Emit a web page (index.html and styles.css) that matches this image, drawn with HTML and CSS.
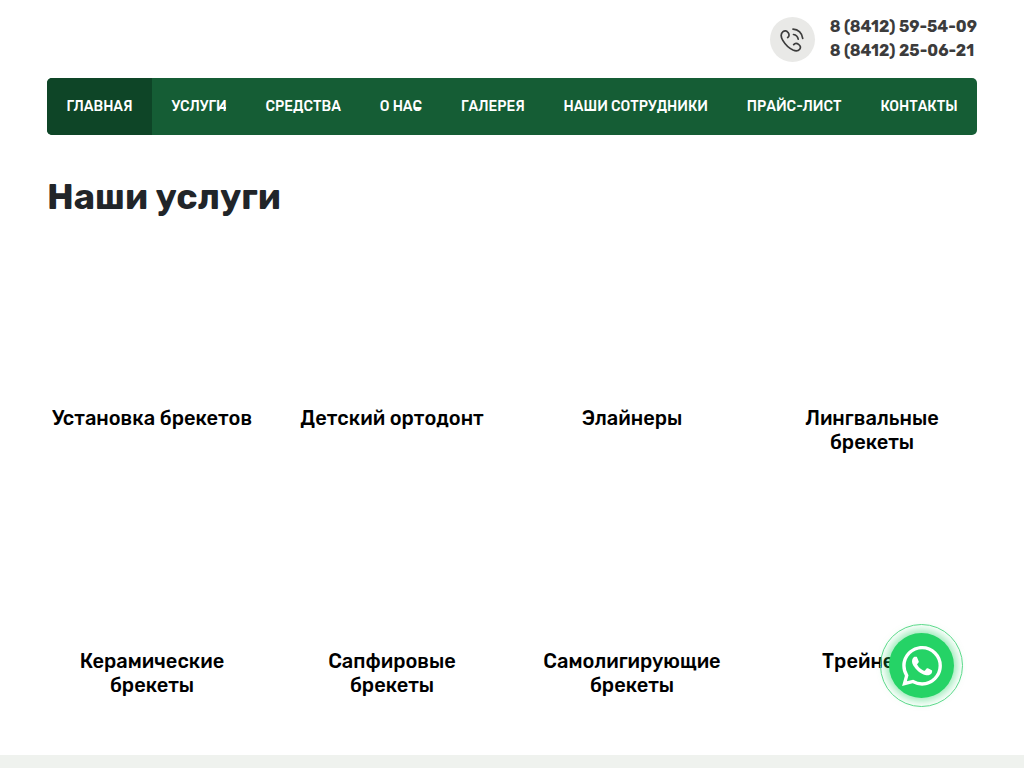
FILE: index.html
```html
<!DOCTYPE html>
<html lang="ru">
<head>
<meta charset="utf-8">
<meta name="viewport" content="width=device-width, initial-scale=1">
<title>Наши услуги</title>
<link rel="stylesheet" href="styles.css">
</head>
<body>
<header class="container">
  <div class="phones">
    <span class="phone-icon">
      <svg viewBox="0 0 26 26" width="26" height="26" fill="none" stroke="#3c3c3c" stroke-width="1.700" stroke-linecap="round" stroke-linejoin="round" aria-hidden="true"><path d="M8.700 10.500c1.800-1.200 1.600-3.300.4-4.900C8 3.800 5.700 3.300 4 4.700 1.600 6.700 1.800 10 3.800 13.400c2.400 4 6.200 7.800 10.200 9.600 2.600 1.100 5.200 1 6.700-.8 1.300-1.600.7-3.500-.8-4.600-1.500-1.200-3.800-1.700-5.200 0M14.500 7.500c2.600.4 4.200 2 4.700 4.600M14 2.200c5.300.2 9.200 3.900 9.700 9.200"/></svg>
    </span>
    <div class="phone-list">
      <a href="tel:88412595409">8 (8412) 59-54-09</a>
      <a href="tel:88412250621">8 (8412) 25-06-21</a>
    </div>
  </div>
  <nav class="menu">
    <a class="active" href="#"><span>Главная</span></a>
    <a href="#"><span class="dropdown">Услуги</span></a>
    <a href="#"><span class="dropdown">Средства</span></a>
    <a href="#"><span class="dropdown">О нас</span></a>
    <a href="#"><span>Галерея</span></a>
    <a href="#"><span>Наши сотрудники</span></a>
    <a href="#"><span>Прайс-лист</span></a>
    <a href="#"><span>Контакты</span></a>
  </nav>
</header>
<main class="container">
  <h1>Наши услуги</h1>
  <div class="services">
    <a href="#">Установка брекетов</a>
    <a href="#">Детский ортодонт</a>
    <a href="#">Элайнеры</a>
    <a href="#">Лингвальные брекеты</a>
    <a href="#">Керамические брекеты</a>
    <a href="#">Сапфировые брекеты</a>
    <a href="#">Самолигирующие брекеты</a>
    <a href="#">Трейнеры</a>
  </div>
</main>
<footer class="footer"></footer>
<a class="whatsapp" href="#" aria-label="WhatsApp">
  <svg viewBox="0 0 24 24" width="40" height="40" fill="#fff" aria-hidden="true"><path d="M17.472 14.382c-.297-.149-1.758-.867-2.030-.967-.273-.099-.471-.148-.670.150-.197.297-.767.966-.940 1.164-.173.199-.347.223-.644.075-.297-.150-1.255-.463-2.390-1.475-.883-.788-1.480-1.761-1.653-2.059-.173-.297-.018-.458.130-.606.134-.133.298-.347.446-.520.149-.174.198-.298.298-.497.099-.198.050-.371-.025-.520-.075-.149-.669-1.612-.916-2.207-.242-.579-.487-.500-.669-.510-.173-.008-.371-.010-.570-.010-.198 0-.520.074-.792.372-.272.297-1.040 1.016-1.040 2.479 0 1.462 1.065 2.875 1.213 3.074.149.198 2.096 3.200 5.077 4.487.709.306 1.262.489 1.694.625.712.227 1.360.195 1.871.118.571-.085 1.758-.719 2.006-1.413.248-.694.248-1.289.173-1.413-.074-.124-.272-.198-.570-.347m-5.421 7.403h-.004a9.870 9.870 0 01-5.031-1.378l-.361-.214-3.741.982.998-3.648-.235-.374a9.860 9.860 0 01-1.510-5.260c.001-5.450 4.436-9.884 9.888-9.884 2.640 0 5.122 1.030 6.988 2.898a9.825 9.825 0 012.893 6.994c-.003 5.450-4.437 9.884-9.885 9.884m8.413-18.297A11.815 11.815 0 0012.050 0C5.495 0 .160 5.335.157 11.892c0 2.096.547 4.142 1.588 5.945L.057 24l6.305-1.654a11.882 11.882 0 005.683 1.448h.005c6.554 0 11.890-5.335 11.893-11.893a11.821 11.821 0 00-3.480-8.413Z"/></svg>
</a>
</body>
</html>
```
FILE: styles.css
```css
* { box-sizing: border-box; }
body {
  display: flex;
  flex-direction: column;
  min-height: 100vh;
  margin: 0;
  background: #fff;
  color: #212529;
  font-family: Rubik, Roboto, "Liberation Sans", sans-serif;
}
a { color: inherit; text-decoration: none; }
.container { margin: 0 47px; }
.phones {
  display: flex;
  justify-content: flex-end;
  gap: 15px;
  height: 78px;
  padding-top: 15px;
}
.phone-icon {
  display: flex;
  align-items: center;
  justify-content: center;
  width: 45px;
  height: 45px;
  margin-top: 2px;
  border-radius: 50%;
  background: #e9e9e7;
}
.phone-list {
  display: flex;
  flex-direction: column;
  color: #3c3c3c;
  font-size: 16px;
  font-weight: 700;
  line-height: 24px;
}
.menu {
  display: flex;
  overflow: hidden;
  border-radius: 5px;
  background: #155d35;
  color: #fff;
  font-size: 14px;
  font-weight: 500;
  line-height: 57px;
  text-transform: uppercase;
  white-space: nowrap;
}
.menu a {
  flex: 1 0 auto;
  text-align: center;
}
.menu .active { background: #0e4527; }
.dropdown { position: relative; }
.dropdown::after {
  content: "";
  position: absolute;
  top: 50%;
  right: 1px;
  width: 6px;
  height: 2px;
  background: #fff;
}
h1 {
  margin: 40px 0 0;
  font-size: 36px;
  font-weight: 700;
  line-height: 44px;
}
.services {
  display: grid;
  grid-template-columns: repeat(4, 1fr);
  column-gap: 30px;
  row-gap: 8px;
  padding-bottom: 58px;
}
.services a {
  padding-top: 187px;
  color: #000;
  font-size: 20px;
  font-weight: 500;
  line-height: 24px;
  text-align: center;
}
.footer { flex: 1; background: #eff2ee; }
.whatsapp {
  position: fixed;
  right: 70px;
  bottom: 70px;
  display: flex;
  align-items: center;
  justify-content: center;
  width: 65px;
  height: 65px;
  border-radius: 50%;
  background: #25d366;
  box-shadow: 0 0 8px 3px rgba(37, 211, 102, 0.5);
}
.whatsapp::before {
  content: "";
  position: absolute;
  inset: -9px;
  border: 1px solid #5bd98a;
  border-radius: 50%;
}
```
